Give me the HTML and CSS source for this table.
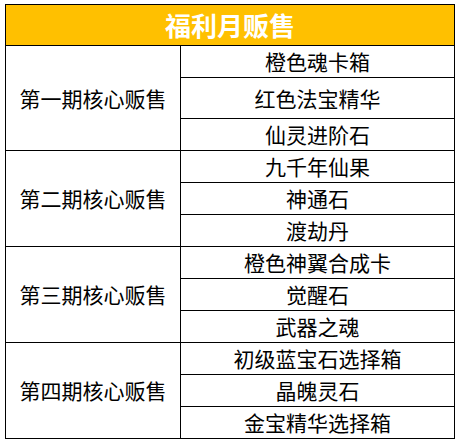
FILE: index.html
```html
<!DOCTYPE html>
<html lang="zh">
<head>
<meta charset="utf-8">
<link rel="stylesheet" href="styles.css">
</head>
<body>
<div class="sheet">
  <div class="title">福利月贩售</div>
  <div class="phase p1">第一期核心贩售</div>
  <div class="item">橙色魂卡箱</div>
  <div class="item">红色法宝精华</div>
  <div class="item">仙灵进阶石</div>
  <div class="phase p2">第二期核心贩售</div>
  <div class="item">九千年仙果</div>
  <div class="item">神通石</div>
  <div class="item">渡劫丹</div>
  <div class="phase p3">第三期核心贩售</div>
  <div class="item">橙色神翼合成卡</div>
  <div class="item">觉醒石</div>
  <div class="item">武器之魂</div>
  <div class="phase p4">第四期核心贩售</div>
  <div class="item">初级蓝宝石选择箱</div>
  <div class="item">晶魄灵石</div>
  <div class="item">金宝精华选择箱</div>
</div>
</body>
</html>
```
FILE: styles.css
```css
html, body {
  margin: 0;
  background: #fff;
}
body {
  padding: 4px 5px;
  font-family: "Noto Sans CJK SC", "Noto Sans", sans-serif;
}
.sheet {
  display: grid;
  width: 448px;
  background: #000;
  padding: 1px;
  gap: 1px;
  grid-template-columns: 174px 273px;
  grid-template-rows: 40px 31px 40px repeat(10, 31px);
}
.sheet > div {
  display: flex;
  align-items: center;
  justify-content: center;
  background: #fff;
  color: #000;
  font-size: 21px;
  line-height: 1;
  white-space: nowrap;
}
.sheet > .title {
  grid-column: 1 / 3;
  background: #ffc000;
  color: #fff;
  font-size: 26px;
  font-weight: bold;
}
.phase { grid-column: 1; grid-row: span 3; }
.item { grid-column: 2; }
```
